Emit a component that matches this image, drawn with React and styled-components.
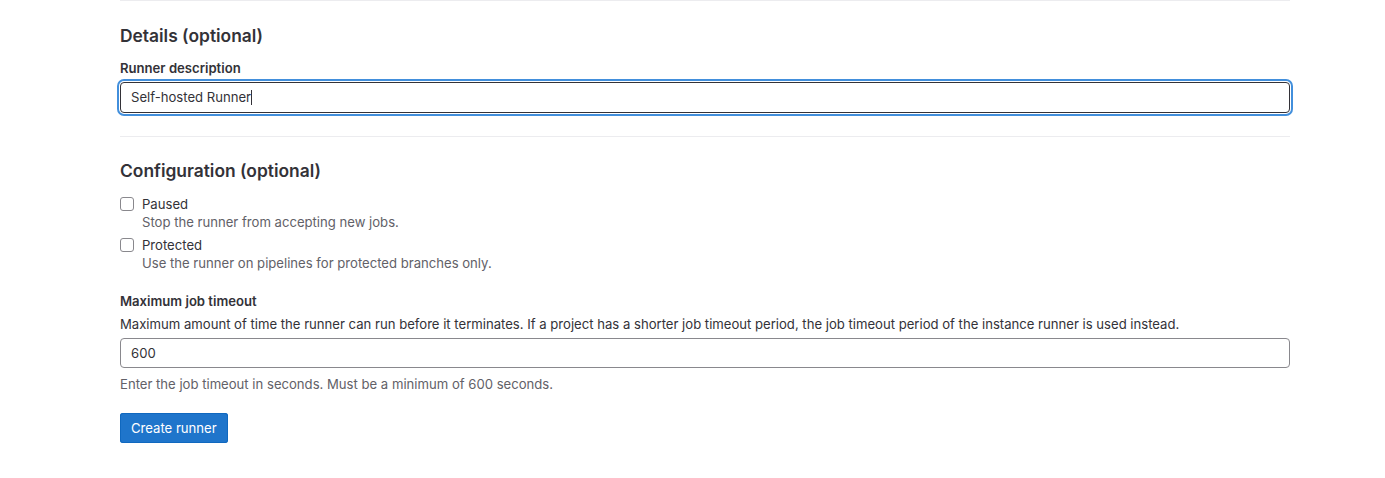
import React from "react";
import styled, { createGlobalStyle } from "styled-components";

const Global = createGlobalStyle`
  html, body { margin: 0; padding: 0; background: #fff; }
  body { font-family: Inter, "Noto Sans", sans-serif; color: #333238; font-size: 13.12px; }
  * { box-sizing: border-box; }
`;

const Page = styled.div`
  padding: 0 95px 0 120px;
  width: 1385px;
`;

const Section = styled.section`
  border-top: 1px solid #ececef;
  padding-top: ${(p) => p.$pt || 0}px;
  padding-bottom: ${(p) => p.$pb || 0}px;
`;

const Heading = styled.h2`
  margin: 0 0 ${(p) => p.$mb ?? 13}px;
  font-size: 17.4px;
  font-weight: 600;
  line-height: 24px;
  color: #333238;
`;

const Label = styled.label`
  display: block;
  font-size: 13.12px;
  font-weight: 600;
  line-height: 16px;
  margin-bottom: ${(p) => p.$mb ?? 6}px;
`;

const Input = styled.input`
  display: block;
  width: 100%;
  height: ${(p) => (p.$focus ? 31 : 30)}px;
  padding: 0 10px;
  font-family: inherit;
  font-size: 13.12px;
  color: #333238;
  border: 1px solid ${(p) => (p.$focus ? "#333238" : "#89888d")};
  border-radius: 4px;
  outline: none;
  box-shadow: ${(p) => (p.$focus ? "0 0 0 1px #fff, 0 0 0 3px #428fdc" : "none")};
  background: #fff;
`;

const CheckRow = styled.div`
  display: flex;
  gap: 8px;
  margin-bottom: 5px;
`;

const Box = styled.span`
  flex: none;
  width: 14px;
  height: 14px;
  border: 1px solid #89888d;
  border-radius: 3px;
  margin-top: 1px;
  background: #fff;
`;

const CheckText = styled.div`
  display: flex;
  flex-direction: column;
`;

const CheckLabel = styled.span`
  font-size: 13.12px;
  line-height: 17px;
`;

const Help = styled.div`
  font-size: 13.12px;
  line-height: 19px;
  color: #626168;
  margin-top: ${(p) => p.$mt || 0}px;
`;

const Desc = styled.div`
  font-size: 13.12px;
  line-height: 18px;
  margin-bottom: 5px;
`;

const Field = styled.div`
  margin-top: ${(p) => p.$mt || 0}px;
`;

const Button = styled.button`
  margin-top: 19px;
  height: 30px;
  padding: 0 11px;
  border: none;
  border-radius: 3px;
  background: #1f75cb;
  color: #fff;
  font-family: inherit;
  font-size: 13.12px;
  box-shadow: inset 0 0 0 1px #1068bf;
`;

const Caret = styled.span`
  display: inline-block;
  width: 1px;
  height: 15px;
  background: #333238;
  vertical-align: -3px;
`;

const FocusWrap = styled.div`
  position: relative;
`;

const FakeValue = styled.div`
  position: absolute;
  left: 11px;
  top: 7px;
  font-size: 13.12px;
  line-height: 17px;
  pointer-events: none;
  color: #333238;
`;

export default function App() {
  return (
    <Page>
      <Global />
      <Section $pt={23} $pb={23}>
        <Heading $mb={12}>Details (optional)</Heading>
        <Label>Runner description</Label>
        <FocusWrap>
          <Input $focus readOnly value="" />
          <FakeValue>
            Self-hosted Runner<Caret />
          </FakeValue>
        </FocusWrap>
      </Section>
      <Section $pt={22}>
        <Heading $mb={13}>Configuration (optional)</Heading>
        <CheckRow>
          <Box />
          <CheckText>
            <CheckLabel>Paused</CheckLabel>
            <Help>Stop the runner from accepting new jobs.</Help>
          </CheckText>
        </CheckRow>
        <CheckRow>
          <Box />
          <CheckText>
            <CheckLabel>Protected</CheckLabel>
            <Help>Use the runner on pipelines for protected branches only.</Help>
          </CheckText>
        </CheckRow>
        <Field $mt={20}>
          <Label $mb={6}>Maximum job timeout</Label>
          <Desc>
            Maximum amount of time the runner can run before it terminates. If a project has a shorter job timeout period, the job timeout period of the instance runner is used instead.
          </Desc>
          <Input readOnly value="600" />
          <Help $mt={7}>Enter the job timeout in seconds. Must be a minimum of 600 seconds.</Help>
        </Field>
        <Button>Create runner</Button>
      </Section>
    </Page>
  );
}
